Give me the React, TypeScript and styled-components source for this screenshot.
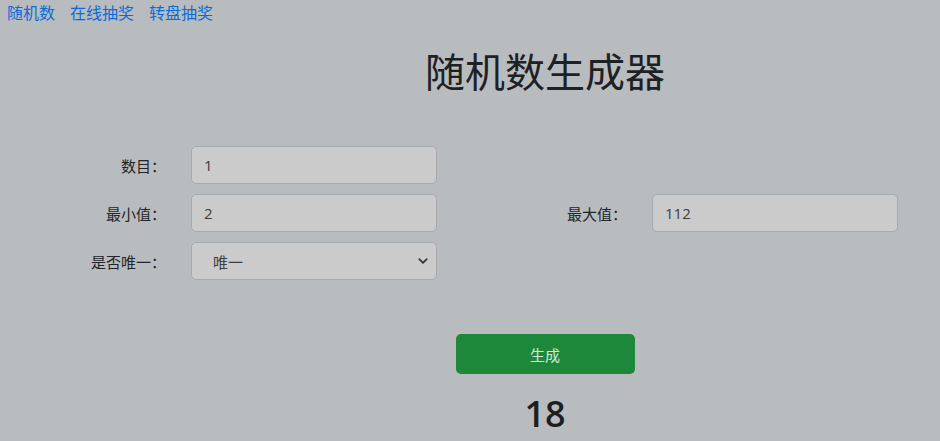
import styled, { createGlobalStyle } from "styled-components";

const GlobalStyle = createGlobalStyle`
  html, body {
    margin: 0;
    padding: 0;
    background: #b9bcbf;
    overflow: hidden;
  }
  body {
    font-family: "Open Sans", "Noto Sans", "Noto Sans CJK SC", sans-serif;
    color: #212529;
  }
`;

const Page = styled.div`
  width: 940px;
  height: 441px;
  background: #b9bcbf;
`;

const Nav = styled.nav`
  display: flex;
  gap: 15px;
  height: 24px;
  align-items: center;
  padding-left: 7px;
  font-family: "Noto Sans CJK SC", sans-serif;
  font-size: 16px;
`;

const NavLink = styled.a`
  color: #0b6bd9;
  text-decoration: none;
  line-height: 24px;
`;

const Centered = styled.div`
  margin-left: 150px;
  display: flex;
  flex-direction: column;
  align-items: center;
`;

const Title = styled.h1`
  margin: 22px 0 0;
  font-family: "Noto Sans CJK SC", sans-serif;
  font-size: 40px;
  font-weight: 400;
  line-height: 48px;
  color: #1e2124;
`;

const Form = styled.div`
  display: grid;
  grid-template-columns: 166px 246px 165px 246px;
  grid-auto-rows: 38px;
  column-gap: 25px;
  row-gap: 10px;
  margin-top: 52px;
`;

const Label = styled.label<{ $col: number; $row: number }>`
  grid-column: ${(p) => p.$col};
  grid-row: ${(p) => p.$row};
  display: flex;
  align-items: center;
  justify-content: flex-end;
  font-family: "Noto Sans CJK SC", sans-serif;
  font-size: 15px;
  color: #212529;
`;

const Field = styled.div<{ $col: number; $row: number; $padLeft?: number }>`
  grid-column: ${(p) => p.$col};
  grid-row: ${(p) => p.$row};
  box-sizing: border-box;
  display: flex;
  align-items: center;
  justify-content: space-between;
  padding: 0 8px 0 ${(p) => p.$padLeft ?? 12}px;
  background: #cbcbcb;
  border: 1px solid #a7aaad;
  border-radius: 5px;
  font-family: "Open Sans", "Noto Sans CJK SC", sans-serif;
  font-size: 15px;
  color: #3a3d41;
`;

const SelectText = styled.span`
  font-family: "Noto Sans CJK SC", sans-serif;
`;

const Chevron = styled.svg`
  width: 10px;
  height: 10px;
`;

const GenerateButton = styled.button`
  margin-top: 54px;
  width: 179px;
  height: 40px;
  border: none;
  border-radius: 5px;
  background: #1e883a;
  color: #d4e6d8;
  font-family: "Noto Sans CJK SC", sans-serif;
  font-size: 15px;
`;

const Result = styled.div`
  margin-top: 18px;
  font-family: "Open Sans", "Noto Sans", sans-serif;
  font-size: 36px;
  font-weight: 600;
  line-height: 44px;
  color: #1c1f22;
`;

export default function App() {
  return (
    <Page>
      <GlobalStyle />
      <Nav>
        <NavLink href="#">随机数</NavLink>
        <NavLink href="#">在线抽奖</NavLink>
        <NavLink href="#">转盘抽奖</NavLink>
      </Nav>
      <Centered>
        <Title>随机数生成器</Title>
      </Centered>
      <Form>
        <Label $col={1} $row={1}>数目：</Label>
        <Field $col={2} $row={1}>1</Field>
        <Label $col={1} $row={2}>最小值：</Label>
        <Field $col={2} $row={2}>2</Field>
        <Label $col={3} $row={2}>最大值：</Label>
        <Field $col={4} $row={2}>112</Field>
        <Label $col={1} $row={3}>是否唯一：</Label>
        <Field $col={2} $row={3} $padLeft={21}>
          <SelectText>唯一</SelectText>
          <Chevron viewBox="0 0 16 16">
            <path
              d="M2 5l6 6 6-6"
              fill="none"
              stroke="#2f3235"
              strokeWidth="2.6"
              strokeLinecap="round"
              strokeLinejoin="round"
            />
          </Chevron>
        </Field>
      </Form>
      <Centered>
        <GenerateButton>生成</GenerateButton>
        <Result>18</Result>
      </Centered>
    </Page>
  );
}
